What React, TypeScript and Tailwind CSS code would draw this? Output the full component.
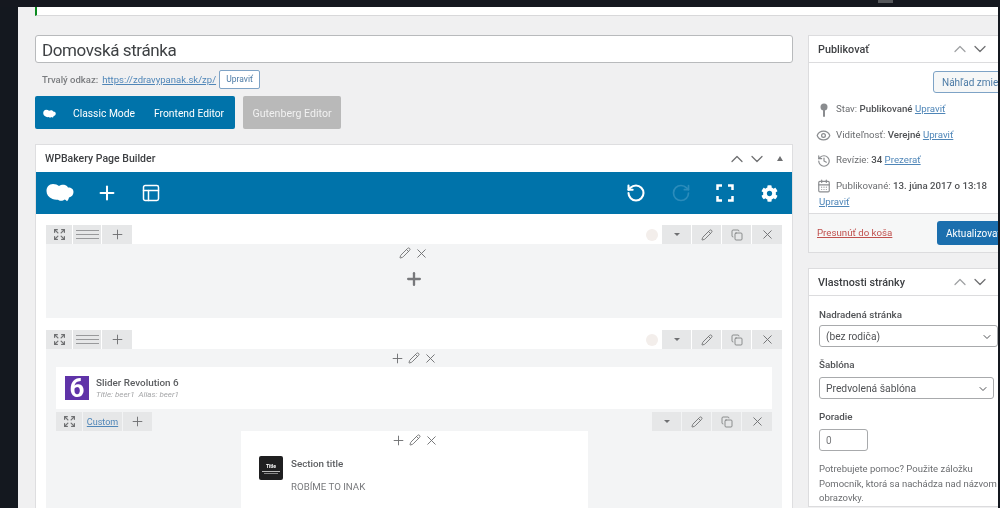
import type { ReactNode } from "react";
import { Plus, PanelsTopLeft, RotateCcw, RotateCw, ChevronUp, ChevronDown, Eye, History, CalendarDays, Pencil, Copy, X, Expand } from "lucide-react";
import { FaCog } from "react-icons/fa";

function Cloud({ className }: { className?: string }) {
  return (
    <svg viewBox="0 0 28 20" className={className} fill="currentColor">
      <path d="M7 1c2.500 0 4.500.8 6 2 1.500-1 4-1.600 6-1 1.500.4 2.500 1.500 3 2.500 3-.2 5.500 1.500 5.500 4.500 0 3-2 5-4.500 5.500-.5 1.800-1 3-2 3.800-.6-.8-1.300-1.500-2.300-1.800-1.200.9-2.800 1.500-4.700 1.200-1-.1-1.500-.6-2-1-2 .2-4 0-5.500-.7C2.500 14.500.5 11.500.5 8 .5 4 3 1 7 1z" />
    </svg>
  );
}

function Pin() {
  return (
    <svg width="10" height="14" viewBox="0 0 10 14" fill="currentColor">
      <circle cx="5" cy="4" r="3.500" />
      <rect x="4" y="6" width="2" height="8" rx="1" />
    </svg>
  );
}

function Corners() {
  return (
    <svg width="18" height="18" viewBox="0 0 18 18" fill="none" stroke="currentColor" strokeWidth="2.500">
      <path d="M1.500 6V1.500H6M12 1.500h4.500V6M16.500 12v4.500H12M6 16.500H1.500V12" />
    </svg>
  );
}

function CtrlBox({ children, className = "w-[26px]" }: { children: ReactNode; className?: string }) {
  return <div className={`${className} h-[19px] bg-[#e6e7e8] flex items-center justify-center text-[#6f7072]`}>{children}</div>;
}

function Lines() {
  return (
    <div className="flex flex-col gap-[3px] w-[23px]">
      <div className="h-px bg-[#98999b]" />
      <div className="h-px bg-[#98999b]" />
      <div className="h-px bg-[#98999b]" />
    </div>
  );
}

function RightControls({ dot = true }: { dot?: boolean }) {
  return (
    <div className="flex items-center gap-px">
      {dot && <div className="w-[12px] h-[12px] rounded-full bg-[#f3eeeb] mr-[3px]" />}
      <CtrlBox className="w-[29px]">
        <div className="w-0 h-0 border-x-[3px] border-x-transparent border-t-[3px] border-t-[#6f7072]" />
      </CtrlBox>
      <CtrlBox className="w-[29px]"><Pencil size={12} strokeWidth={1.800} /></CtrlBox>
      <CtrlBox className="w-[29px]"><Copy size={12} strokeWidth={1.500} /></CtrlBox>
      <CtrlBox className="w-[30px]"><X size={15} strokeWidth={1.500} /></CtrlBox>
    </div>
  );
}

function LeftControls() {
  return (
    <div className="flex gap-px">
      <CtrlBox><Expand size={13} strokeWidth={2.300} /></CtrlBox>
      <CtrlBox className="w-[28px]"><Lines /></CtrlBox>
      <CtrlBox className="w-[30px]"><Plus size={15} strokeWidth={1.500} /></CtrlBox>
    </div>
  );
}

function RowHead() {
  return (
    <div className="flex justify-between items-end h-[19px]">
      <LeftControls />
      <RightControls />
    </div>
  );
}

function HoverTools({ plus = true }: { plus?: boolean }) {
  return (
    <div className="flex justify-center items-center gap-[3px] text-[#6f7072] h-[18px]">
      {plus && <Plus size={15} strokeWidth={1.500} />}
      <Pencil size={12} strokeWidth={1.800} />
      <X size={15} strokeWidth={1.500} />
    </div>
  );
}

function Side({ title, children }: { title: string; children: ReactNode }) {
  return (
    <div className="bg-white border border-[#dcdcde]">
      <div className="h-[27px] flex items-center justify-between pl-[9px] pr-[17px] border-b border-[#dcdcde]">
        <span className="font-medium text-[10.800px] pt-[2px] text-[#3d3f42]">{title}</span>
        <div className="flex text-[#6f7072]">
          <ChevronUp size={20} strokeWidth={1.500} className="text-[#a0a2a4]" />
          <ChevronDown size={20} strokeWidth={1.500} />
        </div>
      </div>
      {children}
    </div>
  );
}

function MetaRow({ icon, children }: { icon: ReactNode; children: ReactNode }) {
  return (
    <div className="flex items-center h-[25.500px] text-[9.700px] text-[#6b6d70]">
      <div className="w-[17px] flex justify-center text-[#8a8c8f] -ml-[4px] mr-[4px]">{icon}</div>
      <div className="whitespace-nowrap">{children}</div>
    </div>
  );
}

function Link({ children }: { children: ReactNode }) {
  return <span className="text-[#4f86b8] underline">{children}</span>;
}

export default function App() {
  return (
    <div className="w-[1000px] h-[508px] overflow-hidden flex flex-col bg-[#f0f0f1] font-['Roboto',sans-serif] blur-[0.4px]">
      <div className="h-[7px] bg-[#15181f] shrink-0 flex justify-end pr-[107px]">
        <div className="w-[15px] h-[3px] bg-[#55575b]" />
      </div>
      <div className="flex flex-1 min-h-0">
        <div className="w-[18px] bg-[#14181f] shrink-0" />
        <div className="flex-1 min-w-0 overflow-hidden">
          <div className="h-[9px] ml-[17px] bg-white border-l-[2px] border-l-[#0b8a1f] border-b border-b-[#d8d8da]" />
          <div className="flex pl-[17px] pt-[19px] gap-[15px]">
            <div className="w-[758px] shrink-0">
              <div className="h-[28px] bg-white border border-[#b8babc] rounded-[3px] flex items-center pl-[6px] pt-[3px] text-[17px] tracking-[-0.4px] text-[#3f4245]">
                Domovská stránka
              </div>
              <div className="flex items-center h-[20px] mt-[6px] pl-[7px] pt-[1px] text-[9.500px]">
                <span className="font-medium text-[#7a7c7f] mr-[4px] pt-[1px]">Trvalý odkaz:</span>
                <span className="pt-[1px]"><Link>https://zdravypanak.sk/zp/</Link></span>
                <div className="ml-[3px] h-[19px] w-[41px] border border-[#7ea3c6] rounded-[2px] bg-white flex items-center justify-center text-[8.500px] text-[#4c7ba6]">
                  Upraviť
                </div>
              </div>
              <div className="flex gap-[8px] mt-[7px]">
                <div className="w-[200px] h-[33px] bg-[#0073aa] rounded-[2px] flex items-center text-white text-[10.300px] pl-[8px] pt-[2px]">
                  <Cloud className="w-[13px] h-[10px] mr-[17px]" />
                  <span>Classic Mode</span>
                  <span className="ml-[19px]">Frontend Editor</span>
                </div>
                <div className="w-[98px] h-[33px] bg-[#b9b9b9] rounded-[2px] flex items-center justify-center pt-[2px] text-white/80 text-[10.600px]">
                  Gutenberg Editor
                </div>
              </div>
              <div className="mt-[15px] bg-white border border-[#dedee0] h-[400px]">
                <div className="h-[27px] flex items-center justify-between pl-[9px] pr-[9px]">
                  <span className="font-medium text-[10.500px] pt-[1px] text-[#3d3f42]">WPBakery Page Builder</span>
                  <div className="flex items-center text-[#6f7072]">
                    <ChevronUp size={20} strokeWidth={1.500} />
                    <ChevronDown size={20} strokeWidth={1.500} />
                    <div className="ml-[10px] w-0 h-0 border-x-[3px] border-x-transparent border-b-[5px] border-b-[#6f7072]" />
                  </div>
                </div>
                <div className="h-[42px] bg-[#0073aa] flex items-center justify-between text-white pl-[10px] pr-[14px]">
                  <div className="flex items-center">
                    <Cloud className="w-[28px] h-[20px] mr-[22px]" />
                    <Plus size={22} strokeWidth={2.200} className="mr-[23px]" />
                    <PanelsTopLeft size={20} strokeWidth={1.800} />
                  </div>
                  <div className="flex items-center">
                    <RotateCcw size={20} strokeWidth={2.500} className="mr-[25px]" />
                    <RotateCw size={20} strokeWidth={2} className="text-[#2b8cbb] mr-[25px]" />
                    <Corners />
                    <FaCog size={17} className="ml-[27px]" />
                  </div>
                </div>
                <div className="px-[10px] pt-[11px]">
                  <RowHead />
                  <div className="h-[74px] bg-[#f3f4f5]">
                    <HoverTools plus={false} />
                    <div className="flex justify-center pt-[7px] text-[#77787b]"><Plus size={20} strokeWidth={2.800} /></div>
                  </div>
                  <div className="mt-[12px]">
                    <RowHead />
                  </div>
                  <div className="bg-[#f3f4f5] h-[200px] px-[10px]">
                    <HoverTools />
                    <div className="h-[42px] bg-white flex items-center pl-[9px]">
                      <div className="w-[24px] h-[24px] bg-[#5f33a8] flex items-center justify-center text-white font-bold text-[26px] leading-none">6</div>
                      <div className="ml-[7px]">
                        <div className="font-medium text-[9.900px] leading-[13px] text-[#5c5e61]">Slider Revolution 6</div>
                        <div className="italic text-[8px] leading-[12px] text-[#a5a6a8]">Title: beer1&nbsp; Alias: beer1</div>
                      </div>
                    </div>
                    <div className="flex justify-between items-center mt-[3px]">
                      <div className="flex gap-px">
                        <CtrlBox><Expand size={13} strokeWidth={2.300} /></CtrlBox>
                        <CtrlBox className="w-[39px]"><span className="text-[9px] text-[#4f86b8] underline pt-[2px]">Custom</span></CtrlBox>
                        <CtrlBox className="w-[29px]"><Plus size={15} strokeWidth={1.500} /></CtrlBox>
                      </div>
                      <RightControls dot={false} />
                    </div>
                    <div className="ml-[185px] w-[347px] bg-white h-[100px]">
                      <HoverTools />
                      <div className="flex pl-[18px] pt-[7px]">
                        <div className="w-[24px] h-[24px] bg-[#1f1f20] rounded-[2px] flex flex-col items-center justify-center text-white">
                          <span className="text-[5px] font-bold leading-[7px]">Title</span>
                          <div className="w-[18px] h-px bg-[#bbb] mt-[1px]" />
                          <div className="w-[14px] h-px bg-[#888] mt-[1px]" />
                        </div>
                        <div className="ml-[8px]">
                          <div className="font-medium text-[9.800px] leading-[14px] pt-[1px] text-[#5c5e61]">Section title</div>
                          <div className="text-[9.700px] leading-[14px] mt-[9px] text-[#77787b]">ROBÍME TO INAK</div>
                        </div>
                      </div>
                    </div>
                  </div>
                </div>
              </div>
            </div>
            <div className="w-[200px] shrink-0">
              <Side title="Publikovať">
                <div className="flex justify-end pt-[8px]">
                  <div className="w-[74px] h-[22px] border border-[#7ea3c6] rounded-l-[3px] bg-[#f6f7f7] flex items-center pl-[8px] text-[10px] text-[#4c7ba6] whitespace-nowrap overflow-hidden">
                    Náhľad zmien
                  </div>
                </div>
                <div className="pl-[10px] pt-[4px] h-[120px]">
                  <MetaRow icon={<Pin />}>Stav: <b className="font-medium text-[#505255]">Publikované</b> <Link>Upraviť</Link></MetaRow>
                  <MetaRow icon={<Eye size={15} />}>Viditeľnosť: <b className="font-medium text-[#505255]">Verejné</b> <Link>Upraviť</Link></MetaRow>
                  <MetaRow icon={<History size={14} />}>Revízie: <b className="font-medium text-[#505255]">34</b> <Link>Prezerať</Link></MetaRow>
                  <MetaRow icon={<CalendarDays size={14} />}>Publikované: <b className="font-medium text-[#505255]">13. júna 2017 o 13:18</b></MetaRow>
                  <div className="text-[9.700px] leading-[12px] -mt-[3px]"><Link>Upraviť</Link></div>
                </div>
                <div className="h-[39px] bg-[#f6f7f7] border-t border-[#dcdcde] flex items-center justify-between pl-[8px]">
                  <span className="text-[9.700px] text-[#c0504d] underline">Presunúť do koša</span>
                  <div className="w-[70px] h-[24px] bg-[#1b6fae] rounded-l-[3px] flex items-center pl-[9px] text-white text-[10px] whitespace-nowrap overflow-hidden">
                    Aktualizovať
                  </div>
                </div>
              </Side>
              <div className="mt-[15px]">
                <Side title="Vlastnosti stránky">
                  <div className="pl-[10px] pt-[12px] text-[9.800px] text-[#505255]">
                    <div className="font-medium leading-[14px]">Nadradená stránka</div>
                    <div className="mt-[3px] w-[179px] h-[22px] border border-[#a8aaac] rounded-[3px] flex items-center justify-between pl-[6px] pr-[4px] pt-[1px] text-[10.200px]">
                      (bez rodiča)
                      <ChevronDown size={12} strokeWidth={2} />
                    </div>
                    <div className="font-medium leading-[14px] mt-[11px]">Šablóna</div>
                    <div className="mt-[5px] w-[175px] h-[22px] border border-[#a8aaac] rounded-[3px] flex items-center justify-between pl-[6px] pr-[4px] pt-[1px] text-[10.300px]">
                      Predvolená šablóna
                      <ChevronDown size={12} strokeWidth={2} />
                    </div>
                    <div className="font-medium leading-[14px] mt-[11px]">Poradie</div>
                    <div className="mt-[5px] w-[49px] h-[22px] border border-[#a8aaac] rounded-[3px] flex items-center pl-[6px] text-[10px] text-[#77787b]">0</div>
                    <div className="mt-[11px] leading-[14.500px] text-[9.500px] text-[#6b6d70] w-[179px]">
                      Potrebujete pomoc? Použite záložku Pomocník, ktorá sa nachádza nad názvom obrazovky.
                    </div>
                  </div>
                </Side>
              </div>
            </div>
          </div>
        </div>
        <div className="w-[2px] bg-[#14181f] shrink-0" />
      </div>
    </div>
  );
}
